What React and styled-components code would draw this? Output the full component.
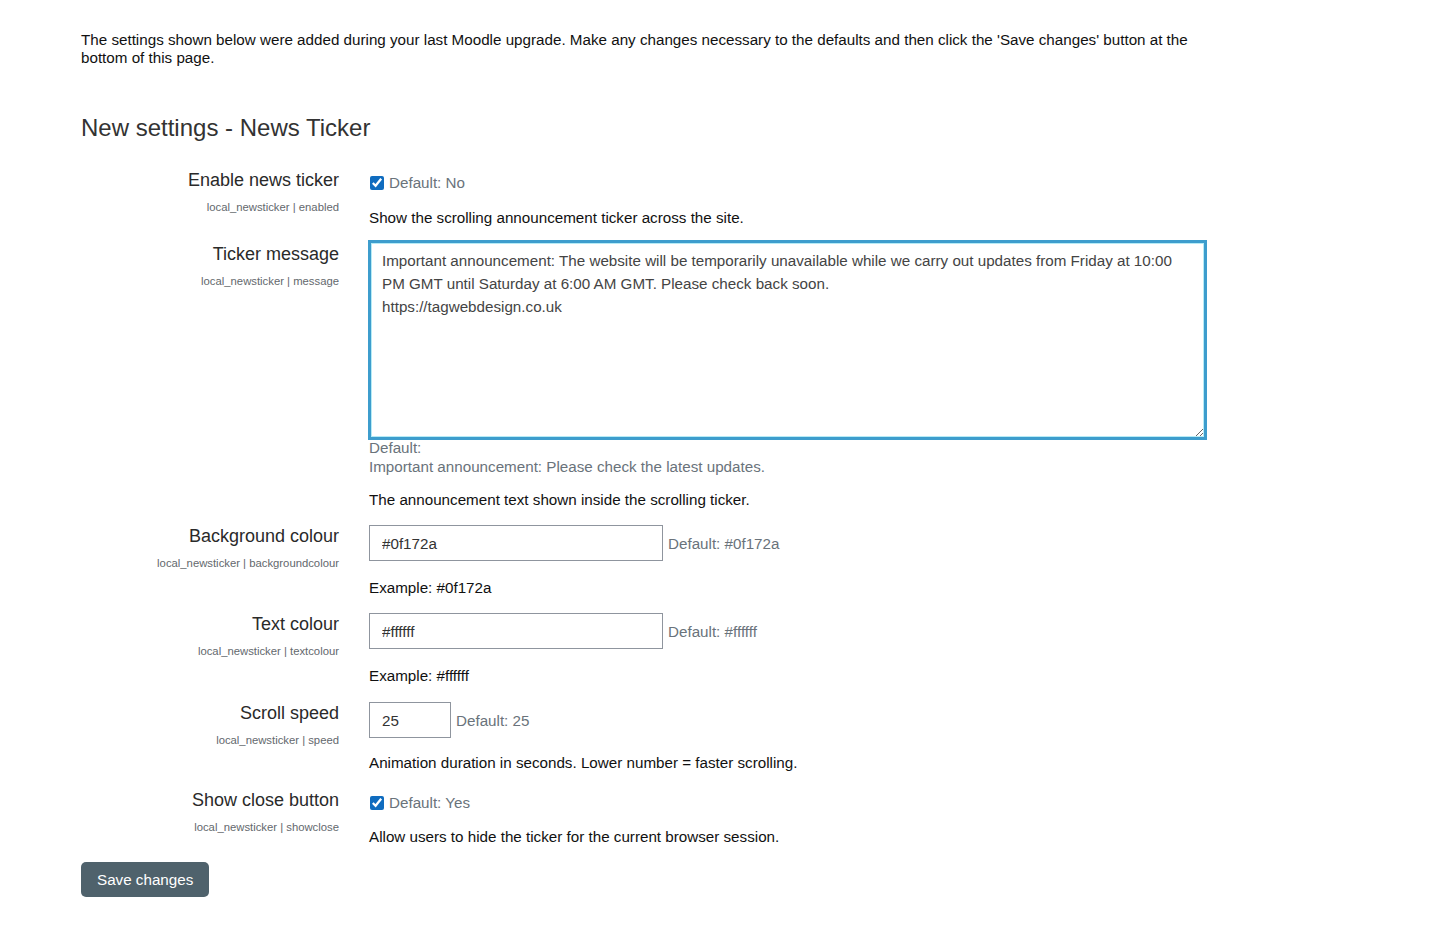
import React from 'react';
import styled, { createGlobalStyle } from 'styled-components';

const GlobalStyle = createGlobalStyle`
	body {
		margin: 0;
		background: #ffffff;
		font-family: 'Liberation Sans', Arial, sans-serif;
		color: #1d2125;
	}
`;

const Page = styled.div`
	width: 1126px;
	padding: 31px 0 40px 81px;
`;

const Intro = styled.p`
	margin: 0;
	font-size: 15.2px;
	line-height: 18px;
	color: #111;
`;

const Heading = styled.h2`
	margin: 46px 0 27px;
	font-size: 24px;
	font-weight: normal;
	line-height: 29px;
	color: #333;
`;

const Setting = styled.div`
	display: grid;
	grid-template-columns: 258px 838px;
	column-gap: 30px;
	margin-bottom: ${(p) => p.$after || 17}px;
`;

const LabelCol = styled.div`
	display: flex;
	flex-direction: column;
	align-items: flex-end;
	text-align: right;
	padding-top: ${(p) => p.$offset || 0}px;
`;

const Label = styled.label`
	font-size: 18px;
	line-height: 22px;
	color: #2a2a2a;
`;

const Key = styled.span`
	margin-top: 9px;
	font-size: 11.3px;
	line-height: 14px;
	color: #63686d;
`;

const Content = styled.div`
	display: flex;
	flex-direction: column;
	align-items: flex-start;
`;

const CheckRow = styled.div`
	display: flex;
	align-items: center;
	gap: 5px;
	height: 21px;
	margin-top: 3px;
`;

const Check = styled.input`
	width: 14px;
	height: 14px;
	margin: 0 0 0 1px;
	accent-color: #0f6cbf;
`;

const DefaultText = styled.span`
	font-size: 15.2px;
	line-height: 19px;
	color: #6a737b;
`;

const DefaultBlock = styled.div`
	margin-top: -2px;
	font-size: 15.2px;
	line-height: 19px;
	color: #6a737b;
`;

const Description = styled.div`
	margin-top: ${(p) => p.$gap || 16}px;
	font-size: 15.2px;
	line-height: 18px;
	color: #111;
`;

const FieldRow = styled.div`
	display: flex;
	align-items: center;
	gap: 5px;
`;

const TextInput = styled.input`
	box-sizing: border-box;
	width: ${(p) => p.$width}px;
	height: 36px;
	padding: 0 12px;
	border: 1px solid #8f959e;
	border-radius: 0;
	font-family: inherit;
	font-size: 15.2px;
	color: #333;
	background: #fff;
	&:focus {
		outline: none;
	}
`;

const TextArea = styled.textarea`
	box-sizing: border-box;
	width: 839px;
	height: 200px;
	margin-left: -1px;
	padding: 6px 10px 6px 11px;
	border: 3px solid #3d9dcd;
	box-shadow: inset 0 0 0 1px #b6ebf6;
	border-radius: 0;
	font-family: inherit;
	font-size: 15.2px;
	line-height: 23px;
	color: #444;
	background: #fff;
	resize: both;
	overflow: hidden;
	&:focus {
		outline: none;
	}
`;

const SaveButton = styled.button`
	margin-top: 0;
	height: 35px;
	padding: 0 16px;
	border: none;
	border-radius: 5px;
	background: #4f626c;
	color: #fff;
	font-family: inherit;
	font-size: 15.2px;
	cursor: pointer;
`;

const message =
	'Important announcement: The website will be temporarily unavailable while we carry out updates from Friday at 10:00 PM GMT until Saturday at 6:00 AM GMT. Please check back soon.\nhttps://tagwebdesign.co.uk';

const SettingLabel = ({ title, name, offset }) => (
	<LabelCol $offset={offset}>
		<Label>{title}</Label>
		<Key>local_newsticker | {name}</Key>
	</LabelCol>
);

const App = () => {
	return (
		<>
			<GlobalStyle />
			<Page>
				<Intro>
					The settings shown below were added during your last Moodle upgrade. Make any changes necessary to the
					defaults and then click the 'Save changes' button at the bottom of this page.
				</Intro>
				<Heading>New settings - News Ticker</Heading>

				<Setting $after={13}>
					<SettingLabel title="Enable news ticker" name="enabled" />
					<Content>
						<CheckRow>
							<Check type="checkbox" defaultChecked />
							<DefaultText>Default: No</DefaultText>
						</CheckRow>
						<Description $gap={16}>Show the scrolling announcement ticker across the site.</Description>
					</Content>
				</Setting>

				<Setting $after={16}>
					<SettingLabel title="Ticker message" name="message" offset={3} />
					<Content>
						<TextArea defaultValue={message} />
						<DefaultBlock>
							Default:
							<br />
							Important announcement: Please check the latest updates.
						</DefaultBlock>
						<Description $gap={15}>The announcement text shown inside the scrolling ticker.</Description>
					</Content>
				</Setting>

				<Setting $after={16}>
					<SettingLabel title="Background colour" name="backgroundcolour" />
					<Content>
						<FieldRow>
							<TextInput $width={294} defaultValue="#0f172a" />
							<DefaultText>Default: #0f172a</DefaultText>
						</FieldRow>
						<Description $gap={18}>Example: #0f172a</Description>
					</Content>
				</Setting>

				<Setting>
					<SettingLabel title="Text colour" name="textcolour" />
					<Content>
						<FieldRow>
							<TextInput $width={294} defaultValue="#ffffff" />
							<DefaultText>Default: #ffffff</DefaultText>
						</FieldRow>
						<Description $gap={18}>Example: #ffffff</Description>
					</Content>
				</Setting>

				<Setting>
					<SettingLabel title="Scroll speed" name="speed" />
					<Content>
						<FieldRow>
							<TextInput $width={82} defaultValue="25" />
							<DefaultText>Default: 25</DefaultText>
						</FieldRow>
						<Description $gap={16}>Animation duration in seconds. Lower number = faster scrolling.</Description>
					</Content>
				</Setting>

				<Setting $after={16}>
					<SettingLabel title="Show close button" name="showclose" />
					<Content>
						<CheckRow>
							<Check type="checkbox" defaultChecked />
							<DefaultText>Default: Yes</DefaultText>
						</CheckRow>
						<Description $gap={15}>Allow users to hide the ticker for the current browser session.</Description>
					</Content>
				</Setting>

				<SaveButton>Save changes</SaveButton>
			</Page>
		</>
	);
};

export default App;
